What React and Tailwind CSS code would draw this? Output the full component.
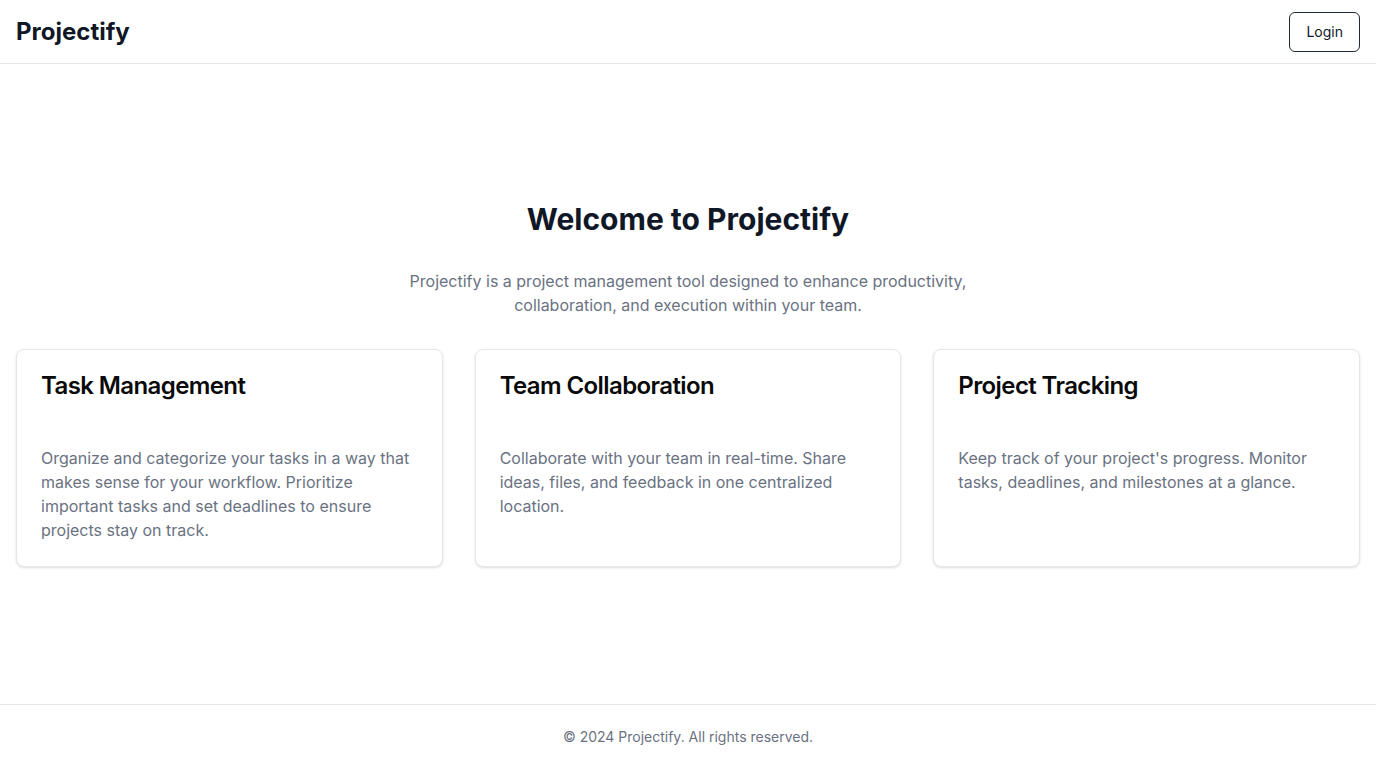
import React from 'react';

const features = [
  {
    title: 'Task Management',
    text: 'Organize and categorize your tasks in a way that makes sense for your workflow. Prioritize important tasks and set deadlines to ensure projects stay on track.',
  },
  {
    title: 'Team Collaboration',
    text: 'Collaborate with your team in real-time. Share ideas, files, and feedback in one centralized location.',
  },
  {
    title: 'Project Tracking',
    text: "Keep track of your project's progress. Monitor tasks, deadlines, and milestones at a glance.",
  },
];

export default function App() {
  return (
    <div className="min-h-screen flex flex-col bg-white font-['Inter',sans-serif]">
      {/* Header */}
      <header className="h-16 border-b border-gray-200 px-4 flex items-center justify-between">
        <h1 className="text-2xl font-bold text-gray-900">Projectify</h1>
        <button className="h-10 px-4 rounded-md border border-gray-800 text-sm font-normal text-gray-900 bg-white">
          Login
        </button>
      </header>

      {/* Main */}
      <main className="flex-1 flex flex-col justify-center px-4">
        <h2 className="text-3xl font-bold text-gray-900 text-center leading-9">Welcome to Projectify</h2>
        <p className="mt-8 mx-auto max-w-[600px] text-center text-base leading-6 text-gray-500">
          Projectify is a project management tool designed to enhance productivity, collaboration, and execution within your team.
        </p>
        <div className="mt-8 grid grid-cols-3 gap-8">
          {features.map((f) => (
            <div key={f.title} className="rounded-lg border border-gray-200 bg-white shadow-sm p-6">
              <h3 className="text-2xl font-semibold leading-none tracking-tight text-neutral-950">{f.title}</h3>
              <p className="mt-12 text-base leading-6 text-gray-500">{f.text}</p>
            </div>
          ))}
        </div>
      </main>

      {/* Footer */}
      <footer className="h-16 border-t border-gray-200 flex items-center justify-center">
        <p className="text-sm text-gray-500">© 2024 Projectify. All rights reserved.</p>
      </footer>
    </div>
  );
}
